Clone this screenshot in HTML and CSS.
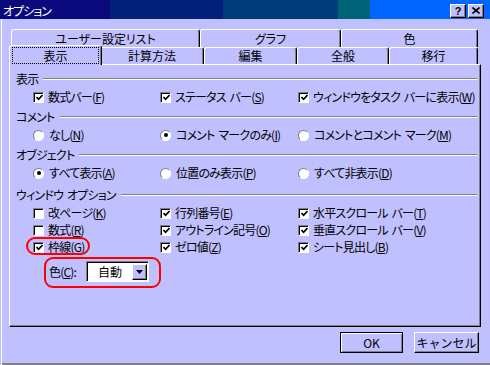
FILE: index.html
```html
<!DOCTYPE html>
<html lang="ja">
<head>
    <meta charset="UTF-8">
    <title>オプション</title>
    <link rel="stylesheet" href="styles.css">
</head>
<body>
    <div class="dialog">
        <div class="titlebar">
            <span class="title">オプション</span>
            <div class="caption-btns">
                <span class="cap-btn">?</span>
                <span class="cap-btn close">
                    <svg width="8" height="7" viewBox="0 0 8 7"><path d="M0.5 0.5 L7.5 6.5 M7.5 0.5 L0.5 6.5" stroke="#000" stroke-width="1.6" fill="none"/></svg>
                </span>
            </div>
        </div>

        <div class="tabs">
            <div class="tab-row back">
                <div class="tab t-user">ユーザー設定リスト</div>
                <div class="tab t-graph">グラフ</div>
                <div class="tab t-color">色</div>
            </div>
            <div class="tab-row front">
                <div class="tab t-view selected"><span class="focus">表示</span></div>
                <div class="tab t-calc">計算方法</div>
                <div class="tab t-edit">編集</div>
                <div class="tab t-general">全般</div>
                <div class="tab t-move">移行</div>
            </div>
        </div>

        <div class="panel">
            <div class="group">
                <div class="legend">表示</div>
                <div class="opts">
                    <span class="opt"><span class="box"><svg width="7" height="7" viewBox="0 0 7 7"><path d="M0.5 3 L2.6 5.3 L6.5 1" stroke="#000" stroke-width="1.7" fill="none"/></svg></span>数式バー(<u>F</u>)</span>
                    <span class="opt"><span class="box"><svg width="7" height="7" viewBox="0 0 7 7"><path d="M0.5 3 L2.6 5.3 L6.5 1" stroke="#000" stroke-width="1.7" fill="none"/></svg></span>ステータス バー(<u>S</u>)</span>
                    <span class="opt"><span class="box"><svg width="7" height="7" viewBox="0 0 7 7"><path d="M0.5 3 L2.6 5.3 L6.5 1" stroke="#000" stroke-width="1.7" fill="none"/></svg></span>ウィンドウをタスク バーに表示(<u>W</u>)</span>
                </div>
            </div>

            <div class="group">
                <div class="legend">コメント</div>
                <div class="opts">
                    <span class="opt"><span class="radio"></span>なし(<u>N</u>)</span>
                    <span class="opt"><span class="radio on"></span>コメント マークのみ(<u>I</u>)</span>
                    <span class="opt"><span class="radio"></span>コメントとコメント マーク(<u>M</u>)</span>
                </div>
            </div>

            <div class="group">
                <div class="legend">オブジェクト</div>
                <div class="opts">
                    <span class="opt"><span class="radio on"></span>すべて表示(<u>A</u>)</span>
                    <span class="opt"><span class="radio"></span>位置のみ表示(<u>P</u>)</span>
                    <span class="opt"><span class="radio"></span>すべて非表示(<u>D</u>)</span>
                </div>
            </div>

            <div class="group window-group">
                <div class="legend">ウィンドウ オプション</div>
                <div class="opts multi">
                    <span class="opt"><span class="box"></span>改ページ(<u>K</u>)</span>
                    <span class="opt"><span class="box"><svg width="7" height="7" viewBox="0 0 7 7"><path d="M0.5 3 L2.6 5.3 L6.5 1" stroke="#000" stroke-width="1.7" fill="none"/></svg></span>行列番号(<u>E</u>)</span>
                    <span class="opt"><span class="box"><svg width="7" height="7" viewBox="0 0 7 7"><path d="M0.5 3 L2.6 5.3 L6.5 1" stroke="#000" stroke-width="1.7" fill="none"/></svg></span>水平スクロール バー(<u>T</u>)</span>

                    <span class="opt"><span class="box"></span>数式(<u>R</u>)</span>
                    <span class="opt"><span class="box"><svg width="7" height="7" viewBox="0 0 7 7"><path d="M0.5 3 L2.6 5.3 L6.5 1" stroke="#000" stroke-width="1.7" fill="none"/></svg></span>アウトライン記号(<u>O</u>)</span>
                    <span class="opt"><span class="box"><svg width="7" height="7" viewBox="0 0 7 7"><path d="M0.5 3 L2.6 5.3 L6.5 1" stroke="#000" stroke-width="1.7" fill="none"/></svg></span>垂直スクロール バー(<u>V</u>)</span>

                    <span class="opt"><span class="mark mark-grid"><span class="box"><svg width="7" height="7" viewBox="0 0 7 7"><path d="M0.5 3 L2.6 5.3 L6.5 1" stroke="#000" stroke-width="1.7" fill="none"/></svg></span>枠線(<u>G</u>)</span></span>
                    <span class="opt"><span class="box"><svg width="7" height="7" viewBox="0 0 7 7"><path d="M0.5 3 L2.6 5.3 L6.5 1" stroke="#000" stroke-width="1.7" fill="none"/></svg></span>ゼロ値(<u>Z</u>)</span>
                    <span class="opt"><span class="box"><svg width="7" height="7" viewBox="0 0 7 7"><path d="M0.5 3 L2.6 5.3 L6.5 1" stroke="#000" stroke-width="1.7" fill="none"/></svg></span>シート見出し(<u>B</u>)</span>
                </div>

                <div class="color-row mark mark-color">
                    <span class="color-label">色(<u>C</u>):</span>
                    <div class="select">
                        <span class="select-value">自動</span>
                        <span class="select-btn">
                            <svg width="7" height="4" viewBox="0 0 7 4"><path d="M0 0 H7 L3.5 4 Z" fill="#000"/></svg>
                        </span>
                    </div>
                </div>
            </div>
        </div>

        <div class="footer">
            <button class="btn default">OK</button>
            <button class="btn">キャンセル</button>
        </div>
    </div>
</body>
</html>
```

FILE: styles.css
```css
body {
    margin: 0;
    font-family: "Noto Sans CJK JP", "Liberation Sans", sans-serif;
    font-size: 12px;
    font-feature-settings: "palt";
    color: #000;
}

.dialog {
    width: 490px;
    height: 365px;
    background-color: #c0c0ff;
    box-shadow: inset 1px 0 0 #c0c0ff, inset 2px 0 0 #fff, inset 0 -2px 0 #808080;
}

/* title bar */
.titlebar {
    height: 19px;
    display: flex;
    align-items: center;
    justify-content: space-between;
    padding: 2px 6px 0 3px;
    box-sizing: border-box;
    color: #fff;
    background: linear-gradient(to right,
        #0a0a7c 0 110px,
        #00207a 110px 223px,
        #003c7a 223px 338px,
        #006478 338px 370px,
        #0066ff 370px);
}

.title {
    line-height: 14px;
    letter-spacing: -1px;
}

.caption-btns {
    display: flex;
    gap: 2px;
}

.cap-btn {
    width: 14px;
    height: 12px;
    display: flex;
    align-items: center;
    justify-content: center;
    background-color: #c0c0ff;
    border-top: 1px solid #fff;
    border-left: 1px solid #fff;
    border-right: 1px solid #000;
    border-bottom: 1px solid #000;
    box-shadow: inset -1px -1px 0 #808080;
    color: #000;
    font-family: "Liberation Sans", sans-serif;
    font-weight: bold;
    font-size: 11px;
    line-height: 12px;
}

/* tabs */
.tabs {
    margin-top: 10px;
    padding-left: 11px;
}

.tab-row {
    display: flex;
}

.tab-row.back {
    height: 18px;
}

.tab-row.front {
    height: 17px;
}

.tab {
    box-sizing: border-box;
    height: 18px;
    display: flex;
    justify-content: center;
    align-items: center;
    border-top: 1px solid #fff;
    border-left: 1px solid #fff;
    border-right: 1px solid #000;
    border-radius: 3px 3px 0 0;
    box-shadow: inset -1px 0 0 #808080;
    background-color: #c0c0ff;
    line-height: 14px;
}

.front .tab {
    height: 17px;
}

.t-user { width: 189px; }
.t-graph { width: 141px; }
.t-color { width: 137px; }

.t-view { width: 89px; }
.t-calc { width: 104px; }
.t-edit { width: 93px; }
.t-general { width: 92px; }
.t-move { width: 89px; }

.front .tab.selected {
    position: relative;
    z-index: 1;
    width: 93px;
    height: 20px;
    margin: -2px -2px 0 -2px;
    padding: 1px 2px 0 2px;
    align-items: stretch;
}

.focus {
    flex: 1;
    display: flex;
    justify-content: center;
    align-items: center;
    border: 1px dotted #000;
    margin-bottom: 1px;
}

/* panel */
.panel {
    box-sizing: border-box;
    margin-left: 9px;
    width: 472px;
    height: 263px;
    padding: 6px 3px 0 6px;
    background-color: #c0c0ff;
    border-top: 1px solid #fff;
    border-left: 1px solid #fff;
    border-right: 1px solid #000;
    border-bottom: 1px solid #000;
    box-shadow: inset -1px -1px 0 #808080;
    letter-spacing: -0.8px;
    word-spacing: 2px;
}

.group + .group {
    margin-top: 4px;
}

.group.window-group {
    margin-top: 6px;
}

.legend {
    display: flex;
    align-items: center;
    gap: 5px;
    line-height: 16px;
    height: 16px;
    margin-bottom: 2px;
}

.legend::after {
    content: "";
    flex: 1;
    border-top: 1px solid #808080;
    border-bottom: 1px solid #fff;
}

.opts {
    display: grid;
    grid-template-columns: 127px 138px 1fr;
    padding-left: 17px;
}

.opts.multi {
    row-gap: 1px;
}

.opt {
    display: flex;
    align-items: center;
    height: 16px;
    line-height: 16px;
    white-space: pre;
}

u {
    text-decoration-thickness: 1px;
    text-underline-offset: 1px;
}

.box {
    box-sizing: border-box;
    width: 11px;
    height: 11px;
    margin-right: 4px;
    flex-shrink: 0;
    display: flex;
    align-items: center;
    justify-content: center;
    background-color: #fff;
    border-top: 1px solid #808080;
    border-left: 1px solid #808080;
    border-right: 1px solid #fff;
    border-bottom: 1px solid #fff;
    box-shadow: inset 1px 1px 0 #000;
}

.box svg {
    margin: 1px 0 0 1px;
}

.radio {
    box-sizing: border-box;
    width: 11px;
    height: 11px;
    margin-right: 5px;
    flex-shrink: 0;
    border-radius: 50%;
    background-color: #fff;
    border: 1px solid;
    border-color: #808080 #fff #fff #808080;
    display: flex;
    align-items: center;
    justify-content: center;
}

.radio.on::after {
    content: "";
    width: 4px;
    height: 4px;
    border-radius: 50%;
    background-color: #000;
}

/* color picker */
.color-row {
    display: flex;
    align-items: center;
    width: max-content;
    margin: 6px 0 0 33px;
}

.color-label {
    width: 37px;
    line-height: 16px;
}

.select {
    box-sizing: border-box;
    width: 63px;
    height: 21px;
    display: flex;
    align-items: center;
    background-color: #fff;
    border-top: 1px solid #808080;
    border-left: 1px solid #808080;
    border-right: 1px solid #fff;
    border-bottom: 1px solid #fff;
    box-shadow: inset 1px 1px 0 #000;
    padding: 2px 1px 1px 2px;
}

.select-value {
    flex: 1;
    padding-left: 9px;
    line-height: 16px;
    letter-spacing: 0;
}

.select-btn {
    box-sizing: border-box;
    width: 15px;
    height: 16px;
    display: flex;
    align-items: center;
    justify-content: center;
    background-color: #c0c0ff;
    border-top: 1px solid #fff;
    border-left: 1px solid #fff;
    border-right: 1px solid #000;
    border-bottom: 1px solid #000;
    box-shadow: inset -1px -1px 0 #808080;
}

/* red annotations drawn over the dialog */
.mark {
    position: relative;
}

.mark::after {
    content: "";
    position: absolute;
    border: 2px solid #f00;
    border-radius: 9px;
    pointer-events: none;
}

.mark-grid {
    display: flex;
    align-items: center;
    height: 16px;
}

.mark-grid::after {
    top: -2px;
    bottom: 0;
    left: -7px;
    right: -6px;
}

.mark-color::after {
    top: -4px;
    bottom: -6px;
    left: -5px;
    right: -12px;
}

/* buttons */
.footer {
    display: flex;
    justify-content: flex-end;
    gap: 11px;
    padding-right: 11px;
    margin-top: 5px;
}

.btn {
    box-sizing: border-box;
    height: 21px;
    width: 65px;
    padding: 0;
    font-family: inherit;
    font-size: 12px;
    color: #000;
    background-color: #c0c0ff;
    border-top: 1px solid #fff;
    border-left: 1px solid #fff;
    border-right: 1px solid #000;
    border-bottom: 1px solid #000;
    box-shadow: inset -1px -1px 0 #808080;
    border-radius: 0;
}

.btn.default {
    width: 63px;
    border: 1px solid #000;
    box-shadow: inset 1px 1px 0 #fff, inset -1px -1px 0 #808080;
}
```
